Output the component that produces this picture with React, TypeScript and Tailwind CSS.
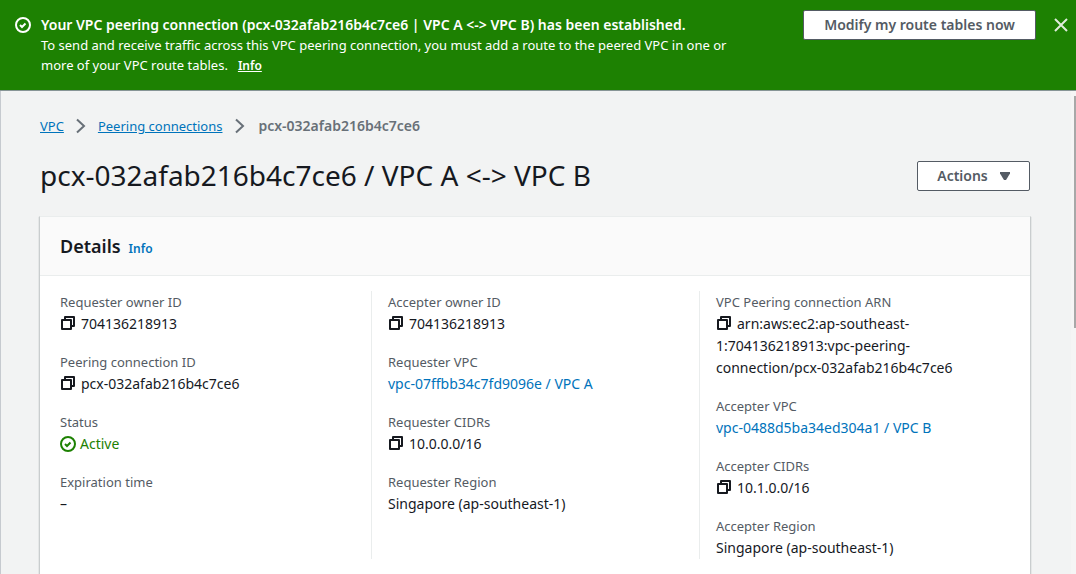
import type { ReactNode } from "react";

function CheckCircle({ className }: { className: string }) {
  return (
    <svg viewBox="0 0 16 16" fill="none" stroke="currentColor" strokeWidth="2" className={className} aria-hidden="true">
      <circle cx="8" cy="8" r="7" />
      <path d="M5 8l2 2 3.5-3.5" />
    </svg>
  );
}

function CopyButton({ label }: { label: string }) {
  return (
    <button type="button" aria-label={label} className="mr-[5px] inline-block size-4 align-[-2px] text-[#16191f]">
      <svg viewBox="0 0 16 16" fill="none" stroke="currentColor" strokeWidth="2" strokeLinejoin="round" className="block size-4">
        <path d="M2 5h9v9H2z" />
        <path d="M5 5V2h9v9h-3" />
      </svg>
    </button>
  );
}

function Chevron() {
  return (
    <svg viewBox="0 0 12 16" fill="none" stroke="#687078" strokeWidth="2" className="h-4 w-3" aria-hidden="true">
      <path d="M2 1.5L9 8l-7 6.5" />
    </svg>
  );
}

function Field({ label, children }: { label: string; children: ReactNode }) {
  return (
    <div>
      <dt className="text-[13px] leading-[22px] text-[#545b64]">{label}</dt>
      <dd className="text-sm leading-[22px]">{children}</dd>
    </div>
  );
}

const column = "flex flex-col gap-4 border-l px-4";
const link = "text-[#0073bb]";

export default function App() {
  return (
    <div className="flex h-screen flex-col overflow-hidden bg-[#f2f3f3] font-['Noto_Sans',sans-serif] text-[13px] leading-[22px] text-[#16191f]">
      <section role="status" className="relative flex shrink-0 items-start bg-[#1d8102] pt-[10px] pr-[7px] pb-[15px] pl-[15px] text-white shadow-[0_1px_0_#879596]">
        <CheckCircle className="mt-[7px] size-4 shrink-0" />
        <div className="mt-[5px] ml-[10px] min-w-0 flex-1 leading-5">
          <p className="text-sm leading-5 font-semibold">Your VPC peering connection (pcx-032afab216b4c7ce6 | VPC A &lt;-&gt; VPC B) has been established.</p>
          <p className="max-w-[715px]">
            To send and receive traffic across this VPC peering connection, you must add a route to the peered VPC in one or more of your VPC route tables.
            <a href="#info" className="ml-[10px] text-xs font-semibold underline">Info</a>
          </p>
        </div>
        <button type="button" className="h-[30px] w-[233px] shrink-0 rounded-xs border border-[#545b64] bg-white text-sm font-semibold text-[#545b64]">
          Modify my route tables now
        </button>
        <button type="button" aria-label="Dismiss" className="mt-[7px] ml-[17px] size-4 shrink-0 text-[#e0ecdc]">
          <svg viewBox="0 0 16 16" fill="none" stroke="currentColor" strokeWidth="2" className="size-4">
            <path d="M2 2l12 12M14 2L2 14" />
          </svg>
        </button>
      </section>

      <div className="flex min-h-0 flex-1 border-l border-[#c6cacf]">
        <main className="min-w-0 flex-1 overflow-hidden pt-[25px] pr-10 pl-[38px]">
          <nav aria-label="Breadcrumb" className="ml-px flex items-center">
            <a href="#vpc" className={`${link} underline`}>VPC</a>
            <span className="mx-[11px]"><Chevron /></span>
            <a href="#peering" className={`${link} underline`}>Peering connections</a>
            <span className="mx-3"><Chevron /></span>
            <span className="text-sm leading-[22px] font-semibold text-[#687078]">pcx-032afab216b4c7ce6</span>
          </nav>

          <div className="mx-px mt-[22px] flex items-end justify-between">
            <h1 className="text-[28px] leading-8">pcx-032afab216b4c7ce6 / VPC A &lt;-&gt; VPC B</h1>
            <button type="button" className="flex h-[30px] w-[113px] items-center justify-center gap-3 rounded-xs border border-[#545b64] bg-white text-sm font-semibold text-[#545b64]">
              Actions
              <svg viewBox="0 0 10 8" fill="currentColor" className="h-2 w-[10px]" aria-hidden="true">
                <path d="M0 0h10v1.5L6 8H4L0 1.5z" />
              </svg>
            </button>
          </div>

          <section className="mt-[25px] border border-[#c9cdce] border-t-[#eaeded] bg-white shadow-[0_1px_1px_rgba(0,28,36,0.3)]">
            <header className="flex items-baseline gap-2 border-b border-[#eaeded] bg-[#fafafa] px-5 pt-[18px] pb-[18px]">
              <h2 className="text-lg leading-[22px] font-semibold">Details</h2>
              <a href="#details-info" className={`${link} text-xs font-semibold`}>Info</a>
            </header>
            <dl className="mx-[3px] mt-[15px] mb-5 grid grid-cols-3">
              <div className={`${column} border-transparent`}>
                <Field label="Requester owner ID"><CopyButton label="Copy requester owner ID" />704136218913</Field>
                <Field label="Peering connection ID"><CopyButton label="Copy peering connection ID" />pcx-032afab216b4c7ce6</Field>
                <Field label="Status">
                  <span className="flex items-center gap-1 text-sm leading-[22px] text-[#1d8102]"><CheckCircle className="size-4" />Active</span>
                </Field>
                <Field label="Expiration time">–</Field>
              </div>
              <div className={`${column} border-[#eaeded]`}>
                <Field label="Accepter owner ID"><CopyButton label="Copy accepter owner ID" />704136218913</Field>
                <Field label="Requester VPC"><a href="#vpc-a" className={link}>vpc-07ffbb34c7fd9096e / VPC A</a></Field>
                <Field label="Requester CIDRs"><CopyButton label="Copy requester CIDRs" />10.0.0.0/16</Field>
                <Field label="Requester Region">Singapore (ap-southeast-1)</Field>
              </div>
              <div className={`${column} border-[#eaeded]`}>
                <Field label="VPC Peering connection ARN">
                  <CopyButton label="Copy ARN" />arn:aws:ec2:ap-southeast-<wbr />1:704136218913:vpc-peering-<wbr /><span className="whitespace-nowrap">connection/pcx-032afab216b4c7ce6</span>
                </Field>
                <Field label="Accepter VPC"><a href="#vpc-b" className={link}>vpc-0488d5ba34ed304a1 / VPC B</a></Field>
                <Field label="Accepter CIDRs"><CopyButton label="Copy accepter CIDRs" />10.1.0.0/16</Field>
                <Field label="Accepter Region">Singapore (ap-southeast-1)</Field>
              </div>
            </dl>
          </section>
        </main>
        <div aria-hidden="true" className="flex w-[5px] shrink-0 justify-end bg-[#f5f5f5] pt-[6px]">
          <div className="h-[232px] w-[2px] bg-[#a8a8a8]" />
        </div>
      </div>
    </div>
  );
}
